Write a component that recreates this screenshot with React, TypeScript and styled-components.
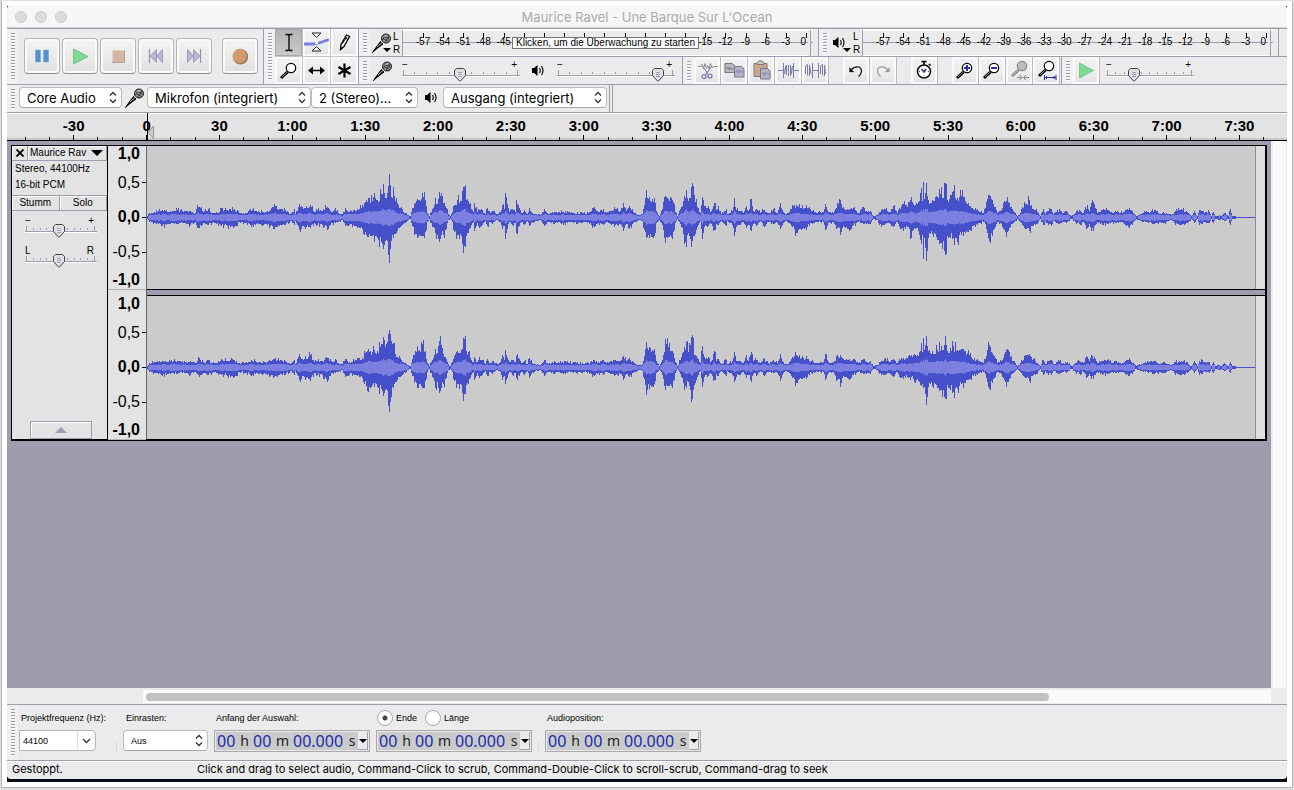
import React, { useState } from "react";
import styled, { createGlobalStyle, css } from "styled-components";

const line = "#9e9cae";
const face = "#ebebeb";
const panel = "#e3e3e3";
const sans = '"Liberation Sans", Arial, sans-serif';
const system = 'Inter, "Liberation Sans", sans-serif';

const GlobalStyle = createGlobalStyle`
  * { box-sizing: border-box; }
  body { margin: 0; background: #e0e0e0; font-family: ${sans}; color: #000; }
  button, select, input { font: inherit; color: inherit; margin: 0; padding: 0; border: 0; border-radius: 0; background: none; }
  svg { display: block; flex: none; }
`;

/* ---------- window ---------- */

const Page = styled.div`
  padding: 1px 1px 2px;
  min-height: 100vh;
  display: flex;
`;
const Frame = styled.div`
  flex: 1;
  min-width: 0;
  display: flex;
  background: #fff;
  border: solid #b4b4b4;
  border-width: 0 1px 1px;
  padding: 5px;
`;
const Backdrop = styled.div`
  flex: 1;
  min-width: 0;
  display: flex;
  background: #070d12;
  padding-bottom: 3px;
`;
const Window = styled.div`
  flex: 1;
  min-width: 0;
  display: flex;
  flex-direction: column;
  background: ${face};
  border-radius: 3px 3px 4px 4px;
  overflow: hidden;
`;
const TitleBar = styled.header`
  height: 22px;
  display: grid;
  grid-template-columns: 1fr auto 1fr;
  align-items: center;
  background: #f6f6f6;
  border-bottom: 1px solid #d2d2d2;
  padding: 0 8px;
`;
const Lights = styled.div`
  display: flex;
  gap: 8px;
`;
const Light = styled.button`
  width: 12px;
  height: 12px;
  border-radius: 50%;
  background: #dcdcdc;
  border: 1px solid #cdcdcd;
`;
const Title = styled.h1`
  margin: 0;
  font: 400 13px/20px ${system};
  color: #aaa;
`;

/* ---------- toolbars ---------- */

const Dock = styled.div`
  display: flex;
`;
const DockColumn = styled.div`
  flex: 1;
  min-width: 0;
`;
const DockRow = styled.div`
  display: flex;
  height: 28px;
`;
const Toolbar = styled.div<{ $grow?: boolean; $open?: boolean }>`
  display: flex;
  align-items: center;
  min-width: 0;
  border-top: 1px solid ${line};
  border-right: ${(p) => (p.$open ? "0" : `1px solid ${line}`)};
  flex: ${(p) => (p.$grow ? "1 1 0" : "none")};
`;
const Grip = styled.div`
  align-self: stretch;
  flex: none;
  width: 11px;
  padding: 4px 3px 3px 4px;
  background: #f0f0f0;
  &::before {
    content: "";
    display: block;
    height: 100%;
    background: repeating-linear-gradient(${line} 0 1px, #fff 1px 2px, #f0f0f0 2px 3px);
  }
`;
const Transport = styled.div`
  display: flex;
  gap: 2px;
  padding: 0 5px 2px 6px;
`;
const BigButton = styled.button<{ $apart?: boolean }>`
  width: 36px;
  height: 36px;
  margin-left: ${(p) => (p.$apart ? "8px" : "0")};
  border: 1px solid #b3b3b3;
  border-bottom-color: #8f8f8f;
  border-radius: 4px;
  background: linear-gradient(#f3f3f3, #e9e9e9 60%, #dedede);
  box-shadow: inset 0 0 0 2px #fbfbfb;
`;
const ToolGrid = styled.div`
  display: grid;
  grid-template-columns: repeat(3, 27px);
  grid-auto-rows: 27px;
  gap: 1px;
  background: #c4c4c4;
`;
const SmallButton = styled.button<{ $on?: boolean; $edge?: boolean }>`
  width: 27px;
  height: 27px;
  display: grid;
  place-items: center;
  flex: none;
  background: ${(p) =>
    p.$on ? "linear-gradient(#b4b4b4, #cacaca)" : "linear-gradient(#f2f2f2, #ececec 60%, #e2e2e2)"};
  box-shadow: inset 0 0 0 ${(p) => (p.$on ? "1px #a8a8a8" : "2px #fafafa")};
  border-right: ${(p) => (p.$edge ? "1px solid #bcbcbc" : "0")};
`;
const ButtonGroup = styled.div`
  display: flex;
`;
const EditGroups = styled.div`
  display: flex;
  gap: 14px;
  padding-right: 1px;
`;

/* ---------- meters ---------- */

const MeterHead = styled.button`
  position: relative;
  width: 23px;
  height: 26px;
  display: flex;
  align-items: center;
  padding-left: 2px;
`;
const MeterArrow = styled.svg`
  position: absolute;
  left: 13px;
  bottom: 4px;
`;
const Sides = styled.div`
  display: flex;
  flex-direction: column;
  width: 9px;
  font-size: 10px;
  line-height: 13px;
`;
const MeterBody = styled.div`
  position: relative;
  flex: 1;
  min-width: 0;
  align-self: stretch;
  display: flex;
  gap: 2px;
  margin-right: 5px;
  border-top: 1px solid #fff;
`;
const MeterBars = styled.div<{ $clip?: boolean }>`
  flex: ${(p) => (p.$clip ? "0 0 3px" : "1")};
  display: grid;
  grid-template-rows: 1fr 1fr;
  border-left: 1px solid ${line};
  background: linear-gradient(#fff 0 1px, transparent 1px);
  > i {
    border-bottom: 1px solid #fff;
  }
  > i:first-child {
    border-bottom-color: ${line};
  }
`;
const MeterScale = styled.div`
  position: absolute;
  inset: 0 7px 0 21px;
  display: flex;
  justify-content: space-between;
  font-size: 10px;
  line-height: 10px;
`;
const Mark = styled.div<{ $last?: boolean }>`
  position: relative;
  width: 0;
  display: flex;
  justify-content: ${(p) => (p.$last ? "flex-end" : "center")};
  padding-top: 7px;
  white-space: nowrap;
  &::before {
    content: "";
    position: absolute;
    top: 3px;
    left: 0;
    width: 1px;
    height: 5px;
    background: #000;
  }
`;
const MeterHint = styled.button`
  position: absolute;
  left: 110px;
  top: 7px;
  height: 12px;
  padding: 0 3px;
  border: 1px solid #777;
  background: #fff;
  font-size: 10px;
  line-height: 10px;
  white-space: nowrap;
`;
const Filler = styled.div`
  flex: 1;
  border-top: 1px solid ${line};
`;
const Stub = styled.div`
  flex: 0 0 8px;
  border-top: 1px solid ${line};
`;

/* ---------- sliders ---------- */

const SliderBox = styled.label<{ $w: number }>`
  position: relative;
  display: block;
  flex: none;
  width: ${(p) => p.$w}px;
  height: 26px;
  > input {
    position: absolute;
    inset: 0;
    width: 100%;
    height: 100%;
    opacity: 0;
  }
`;
const Ends = styled.span<{ $w: number }>`
  position: absolute;
  left: 0;
  top: 2px;
  width: ${(p) => p.$w}px;
  display: flex;
  justify-content: space-between;
  font-size: 10px;
  line-height: 10px;
`;

function Slider({ w, at, label, ends = ["−", "+"] }: { w: number; at: number; label: string; ends?: string[] }) {
  const [value, setValue] = useState(at);
  const step = (w - 4) / 10;
  return (
    <SliderBox $w={w}>
      <Ends $w={w - 3}>
        <span>{ends[0]}</span>
        <span>{ends[1]}</span>
      </Ends>
      <svg width={w} height="26" shapeRendering="crispEdges" aria-hidden="true">
        <rect x="0" y="17" width={w} height="1" fill={line} />
        <rect x="0" y="18" width={w} height="1" fill="#fff" />
        {Array.from({ length: 11 }, (_, i) => {
          const tall = i % 10 === 0;
          return (
            <rect key={i} x={Math.round(1 + i * step)} y={tall ? 12 : 14} width="1" height={tall ? 5 : 2} fill={line} />
          );
        })}
        <g transform={`translate(${value - 6} 10)`} shapeRendering="auto">
          <path d="M2.5.5h7l2 2v5l-5 5.5h-1l-5-5.5v-5z" fill="#dedee4" stroke="#444" />
          <path d="M4 4.5h4M4 6.5h4M4 8.5h4" stroke="#a5a3b5" />
        </g>
      </svg>
      <input
        type="range"
        aria-label={label}
        min={0}
        max={w}
        value={value}
        onChange={(e) => setValue(Number(e.target.value))}
      />
    </SliderBox>
  );
}

const Spaced = styled.div<{ $l: number; $r: number }>`
  padding: 0 ${(p) => p.$r}px 0 ${(p) => p.$l}px;
`;

/* ---------- drop-downs ---------- */

const SelectBox = styled.div<{ $w: number; $small?: boolean }>`
  position: relative;
  flex: none;
  width: ${(p) => p.$w}px;
  > svg {
    position: absolute;
    right: 5px;
    top: 4px;
    pointer-events: none;
  }
  > select {
    appearance: none;
    display: block;
    width: 100%;
    height: 21px;
    padding-left: 7px;
    border: 1px solid #bdbdbd;
    border-bottom-color: #a9a9a9;
    border-radius: 4px;
    background: #fff;
    ${(p) =>
      p.$small
        ? css`
            font: 9px ${sans};
          `
        : css`
            font: 13px ${system};
          `}
  }
`;
function Select({ w, value, label, small, id }: { w: number; value: string; label: string; small?: boolean; id?: string }) {
  return (
    <SelectBox $w={w} $small={small}>
      <select id={id} aria-label={label} defaultValue={value}>
        <option>{value}</option>
      </select>
      <svg width="8" height="13" viewBox="0 0 8 13" fill="none" stroke="#333" strokeWidth="1.3">
        <path d="M1 4.5l3-3 3 3M1 8.500l3 3 3-3" />
      </svg>
    </SelectBox>
  );
}
const DeviceControls = styled.div`
  display: flex;
  align-items: center;
  padding: 0 2px 2px 1px;
`;
const IconSlot = styled.span<{ $w: number }>`
  width: ${(p) => p.$w}px;
  display: grid;
  place-items: center;
`;

/* ---------- icons ---------- */

const Mic = () => (
  <svg width="20" height="20" viewBox="0 0 20 20">
    <path d="M.5 19.500l4.500-4 6-4.500-2.500-2.500-4.500 6z" fill="#000" stroke="#000" />
    <path d="M5 14l5-4.500" stroke="#ccc" />
    <circle cx="14" cy="5.500" r="4.500" fill="#9a9a9a" stroke="#111" />
    <path d="M11 5.500l5.500 3M11.500 3l6 3.500M14 1.500l-4 6M17 3l-4 6M15 4l2 1" stroke="#333" />
    <path d="M12.500 3.500l2-1" stroke="#fff" />
  </svg>
);
const Speaker = () => (
  <svg width="14" height="13" viewBox="0 0 14 13">
    <path d="M1 4h2l3.500-3v11L3 9H1z" fill="#000" />
    <path d="M8.500 4q1.500 2.500 0 5M10.500 2q3 4.500 0 9" fill="none" stroke="#111" strokeWidth="1.200" />
  </svg>
);
const PauseIcon = () => (
  <svg width="34" height="34" viewBox="0 0 34 34">
    <path d="M10.500 11h5v12h-5zM18.500 11h5v12h-5z" fill="#4f92d3" stroke="#8fa6bd" strokeWidth=".6" />
  </svg>
);
const PlayIcon = () => (
  <svg width="34" height="34" viewBox="0 0 34 34">
    <path d="M10.500 10l14.500 7.500-14.500 7.500z" fill="#7ed991" stroke="#63b276" strokeWidth=".8" />
  </svg>
);
const StopIcon = () => (
  <svg width="34" height="34" viewBox="0 0 34 34">
    <path d="M11.500 11.500h11.500v11.500h-11.500z" fill="#d2b7a6" />
    <path d="M11 23.500h12.500v-12" fill="none" stroke="#b39d90" />
  </svg>
);
const SkipIcon = ({ flip }: { flip?: boolean }) => (
  <svg width="34" height="34" viewBox="0 0 34 34">
    <g transform={flip ? "translate(34 0) scale(-1 1)" : undefined}>
      <path d="M10.500 10v14" stroke="#9690a8" strokeWidth="1.200" />
      <path d="M17.500 10.500v13l-6.500-6.500zM23.500 10.500v13l-6-6.500z" fill="#beb2d6" stroke="#8f89a2" strokeWidth=".7" />
    </g>
  </svg>
);
const RecordIcon = () => (
  <svg width="34" height="34" viewBox="0 0 34 34">
    <circle cx="17.500" cy="17.700" r="7.700" fill="#94795f" />
    <circle cx="16.700" cy="17" r="7.200" fill="#cf9a6e" />
  </svg>
);
const BeamIcon = () => (
  <svg width="21" height="21" viewBox="0 0 21 21" fill="none" stroke="#000" strokeWidth="1.300">
    <path d="M7.500 2.500H10l1 1 1-1h2.500M11 3.500v14M7.500 18.500H10l1-1 1 1h2.500" />
  </svg>
);
const EnvelopeIcon = () => (
  <svg width="25" height="23" viewBox="0 0 25 23">
    <path d="M0 13h9q8-1 16-4.500" fill="none" stroke="#7b80e2" strokeWidth="2.800" />
    <path d="M8 2h9l-4.500 4.500zM8 20h9l-4.500-4.500z" fill="#fff" stroke="#222" />
    <circle cx="12.500" cy="11.500" r="1.500" fill="#fff" />
  </svg>
);
const PencilIcon = () => (
  <svg width="21" height="21" viewBox="0 0 21 21">
    <path d="M6.500 17.500l.5-5 5.500-9.500 3 1.500-5.500 10z" fill="#fff" stroke="#000" strokeWidth="1.300" />
    <path d="M11 6l3 1.500M8.500 11.500l4-6.500" stroke="#000" />
    <path d="M6 18.500l.5-3.500 2 1.200z" fill="#000" />
  </svg>
);
const Lens = ({ sign, tone = "#000", fill = "#fff" }: { sign?: string; tone?: string; fill?: string }) => (
  <g>
    <path d="M2 17l6.500-6" stroke={tone} strokeWidth="3" />
    <path d="M3 16l5-5" stroke={tone === "#000" ? "#999" : "#ccc"} strokeWidth=".8" />
    <circle cx="12" cy="7" r="4.700" fill={fill} stroke={tone} strokeWidth="1.200" />
    {sign && <path d={sign} stroke="#2c2ca8" strokeWidth="2" />}
  </g>
);
const ZoomIcon = ({ sign }: { sign?: string }) => (
  <svg width="20" height="20" viewBox="0 0 20 20" fill="none">
    <Lens sign={sign} />
  </svg>
);
const FitSelectionIcon = () => (
  <svg width="21" height="21" viewBox="0 0 21 21" fill="none">
    <g transform="translate(1 -1)">
      <Lens tone="#8a8a8a" fill="#bdbdbd" />
    </g>
    <path d="M8 17.500h5M14 17.500h6M10.500 15l2.500 2.500-2.500 2.500M17 15l-2.500 2.500 2.500 2.500" stroke="#8a8a8a" />
  </svg>
);
const FitProjectIcon = () => (
  <svg width="21" height="21" viewBox="0 0 21 21" fill="none">
    <g transform="translate(1 -1)">
      <Lens />
    </g>
    <path d="M8.500 15v5M20 15v5M8.500 17.500H20M11 16l-1.500 1.500L11 19M17.500 16l1.500 1.500-1.500 1.500" stroke="#2c2ca8" />
  </svg>
);
const ShiftIcon = () => (
  <svg width="21" height="21" viewBox="0 0 21 21">
    <path d="M5 10.500h11" stroke="#000" strokeWidth="1.600" />
    <path d="M2 10.500l5-4v8zM19 10.500l-5-4v8z" fill="#000" />
  </svg>
);
const MultiIcon = () => (
  <svg width="21" height="21" viewBox="0 0 21 21" stroke="#000" strokeWidth="2.200">
    <path d="M10.500 3.500v14M4.500 7l12 7M4.500 14l12-7" />
  </svg>
);
const CutIcon = () => (
  <svg width="21" height="21" viewBox="0 0 21 21" fill="none">
    <path d="M1 6.500h3l1-2 1.500 4 1.500-5 1.500 5 1-3 1.500 3 1.500-5 1.500 4 1.500-1h4" stroke="#8a8a8a" />
    <path d="M6 7l6 8M14 7l-5.500 8" stroke="#6f6fa8" />
    <circle cx="7" cy="16.500" r="2" stroke="#6f6fa8" strokeWidth="1.200" />
    <circle cx="13" cy="16" r="2" stroke="#6f6fa8" strokeWidth="1.200" />
  </svg>
);
const CopyIcon = () => (
  <svg width="21" height="21" viewBox="0 0 21 21" fill="#b7b7b7" stroke="#777">
    <path d="M1 3.500h7l2.500 2v7H1z" />
    <path d="M2 9h1l1-2 1 3 1-3 1 2h3" fill="none" stroke="#888" />
    <path d="M10.500 6.500h7l2.500 2.500v8h-9.500z" fill="#b4b4c4" stroke="#74749a" />
    <path d="M11.500 12h1l1-2 1 4 1-4 1 2h3" fill="none" stroke="#8888ac" />
  </svg>
);
const PasteIcon = () => (
  <svg width="21" height="21" viewBox="0 0 21 21">
    <path d="M3 3.500h13v13H3z" fill="#c9a78f" stroke="#8a7a70" />
    <path d="M6 4.500V3l2-2h3l2 2v1.500z" fill="#c8c8c8" stroke="#777" />
    <path d="M9.500 8.500h7l2.500 2.500v8H9.500z" fill="#b4b4c4" stroke="#74749a" />
    <path d="M10.500 14h1l1-2 1 4 1-4 1 2h3" fill="none" stroke="#8888ac" />
  </svg>
);
const TrimIcon = () => (
  <svg width="21" height="21" viewBox="0 0 21 21" fill="none" stroke="#7c7cab">
    <path d="M0 10.500h5M16 10.500h5M5.500 3v15M15.500 3v15" />
    <path d="M6.500 14l1-8 1 9V5M10.500 16V5M12.500 16V5l1 9 1-8" />
  </svg>
);
const SilenceIcon = () => (
  <svg width="21" height="21" viewBox="0 0 21 21" fill="none" stroke="#7c7cab">
    <path d="M.5 14V6l2-1.500v11M4.500 16V5l1.500 9M7.500 3v15M13.500 3v15M7.500 10.500h6M15.500 14V6l2-1.500v11M19.500 16V5l1 9" />
  </svg>
);
const UndoIcon = ({ redo }: { redo?: boolean }) => (
  <svg width="20" height="20" viewBox="0 0 20 20">
    <g transform={redo ? "translate(20 0) scale(-1 1)" : undefined} stroke={redo ? "#9a9a9a" : "#111"}>
      <path d="M5 9q3.500-4 8-3 4 2 1.500 7.500l-2 2" fill="none" strokeWidth="1.200" />
      <path d="M3.500 6.500v4.500h4.500z" fill={redo ? "#9a9a9a" : "#111"} strokeWidth=".3" />
    </g>
  </svg>
);
const ClockIcon = () => (
  <svg width="20" height="22" viewBox="0 0 20 22" fill="none">
    <path d="M7.500 1.500h5M10 1v4M15 4l1.500 1.500" stroke="#000" strokeWidth="1.600" />
    <circle cx="10" cy="11.500" r="6.500" fill="#fff" stroke="#111" strokeWidth="1.500" />
    <path d="M7.500 9l2.500 3 2-3" stroke="#2c2ca8" strokeWidth="1.600" />
    <path d="M10 15.500v1M5 11.500h1M14 11.500h1" stroke="#555" />
  </svg>
);
const SmallPlay = () => (
  <svg width="21" height="21" viewBox="0 0 21 21">
    <path d="M3.500 3l14 7.500-14 7.500z" fill="#7ed991" stroke="#6ec181" strokeWidth=".8" />
  </svg>
);

/* ---------- time ruler ---------- */

const TimeRuler = styled.div`
  height: 29px;
  display: flex;
  padding: 0 11px 0 6px;
  background: ${panel};
  border-top: 1px solid ${line};
  border-bottom: 1px solid #000;
  box-shadow: inset 0 1px #fff, inset 0 -2px #c8c8c8;
  font: bold 15px/26px ${sans};
`;
const TimeCell = styled.div<{ $zero?: boolean }>`
  position: relative;
  flex: 3 1 0;
  min-width: 0;
  text-align: center;
  ${(p) =>
    p.$zero &&
    css`
      &::after {
        content: "";
        position: absolute;
        left: 50%;
        top: 0;
        width: 1px;
        height: 27px;
        background: #000;
      }
    `}
`;
const Ticks = styled.div<{ $lead?: boolean }>`
  position: ${(p) => (p.$lead ? "static" : "absolute")};
  flex: 1 1 0;
  inset: auto 0 0;
  height: 27px;
  display: flex;
  align-items: flex-end;
  > i {
    flex: 1;
    height: 3px;
    background: linear-gradient(#000, #000) center / 1px 100% no-repeat;
  }
  > i:nth-child(2) {
    height: 5px;
  }
`;
const PlayMarker = styled.svg`
  position: absolute;
  left: calc(50% + 1px);
  bottom: 1px;
`;

/* ---------- track ---------- */

const Middle = styled.div`
  flex: 1;
  display: flex;
`;
const TrackArea = styled.main`
  flex: 1;
  min-width: 0;
  padding: 4px;
  background: ${line};
`;
const Track = styled.section`
  display: flex;
  border: solid #000;
  border-width: 1px 2px 2px 1px;
`;
const TrackPanel = styled.div`
  flex: none;
  width: 96px;
  display: flex;
  flex-direction: column;
  align-items: stretch;
  background: ${panel};
  border-right: 1px solid #000;
  font-size: 10px;
  line-height: 14px;
`;
const bevel = css`
  border: solid ${line};
  border-width: 0 1px 1px 0;
  box-shadow: inset 1px 1px #fff;
`;
const TrackHead = styled.div`
  display: flex;
  height: 15px;
`;
const CloseButton = styled.button`
  ${bevel}
  width: 16px;
  display: grid;
  place-items: center;
`;
const NameButton = styled.button`
  ${bevel}
  flex: 1;
  display: flex;
  justify-content: space-between;
  align-items: center;
  padding: 0 3px 0 2px;
  white-space: nowrap;
`;
const TrackInfo = styled.p`
  margin: 0;
  padding: 0 3px 2px;
  line-height: 16px;
`;
const MuteSolo = styled.div`
  display: grid;
  grid-template-columns: 1fr 1fr;
  border-top: 1px solid ${line};
  > button {
    ${bevel}
    height: 15px;
  }
`;
const PanelSliders = styled.div`
  padding: 3px 0 0 13px;
  display: flex;
  flex-direction: column;
  gap: 4px;
`;
const Collapse = styled.button`
  ${bevel}
  border-width: 1px;
  width: 62px;
  height: 18px;
  margin: auto 0 0 18px;
  display: grid;
  place-items: center;
`;
const AmpColumn = styled.div`
  flex: none;
  width: 38px;
  display: flex;
  flex-direction: column;
  gap: 7px;
  background: ${panel};
`;
const AmpRuler = styled.div`
  height: 143px;
  display: grid;
  grid-template-rows: 15px 43px 26px 44px 15px;
  box-shadow: 0 1px #b5b5b5;
  font-size: 16px;
  line-height: 12px;
`;
const Amp = styled.div<{ $bold?: boolean; $tick?: boolean }>`
  display: flex;
  justify-content: flex-end;
  align-items: center;
  gap: 2px;
  padding-right: ${(p) => (p.$tick ? "0" : "6px")};
  font-weight: ${(p) => (p.$bold ? 700 : 400)};
  &:last-child {
    align-items: flex-start;
  }
  &::after {
    content: "";
    display: ${(p) => (p.$tick ? "block" : "none")};
    width: 4px;
    height: 1px;
    background: #000;
  }
`;
const Waves = styled.div`
  flex: 1;
  min-width: 0;
  display: flex;
  flex-direction: column;
  border-left: 1px solid #666;
`;
const Clip = styled.div`
  display: flex;
  height: 143px;
  padding-right: 9px;
  background: #dfdfdf;
  > svg {
    flex: 1;
    min-width: 0;
    width: 100%;
    height: 143px;
    background: #cbcbcb;
    border-right: 1px solid #8f8f8f;
  }
`;
const ChannelGap = styled.div`
  height: 7px;
  background: ${line};
  border: solid #000;
  border-width: 1px 0;
`;

/* Peak levels: column, up/down of the left channel, then of the right one where it differs. */
type Peak = [number, number, number, number?, number?];
const part = (origin: number, rows: Peak[]): Peak[] =>
  rows.map(([x, ...rest]) => [Math.round(origin + x / 3), ...rest] as Peak);

const peaks: Peak[] = [
  ...part(0, [
    [0, 1, 1], [6, 4, 4], [20, 5, 5], [45, 7, 8], [70, 6, 6], [90, 7, 6], [110, 6, 5], [130, 6, 7], [144, 4, 4],
    [149, 12, 10, 6, 6], [157, 10, 10, 9, 9], [168, 5, 5], [182, 8, 7], [195, 4, 5], [215, 5, 6], [222, 9, 8, 8, 7],
    [232, 7, 7], [250, 8, 9], [262, 8, 9, 7, 9], [275, 4, 4], [295, 4, 5], [315, 7, 7], [335, 5, 6], [355, 5, 6],
    [370, 7, 8], [382, 13, 11, 8, 9], [390, 8, 9], [415, 7, 7], [430, 3, 3], [440, 8, 7], [445, 3, 3], [457, 13, 12, 13, 12],
    [468, 8, 8], [490, 12, 10, 12, 13], [500, 5, 5], [510, 7, 7], [525, 6, 7], [541, 12, 10, 12, 14],
  ]),
  ...part(173, [
    [22, 10, 12, 9, 14], [35, 5, 5], [45, 9, 5], [55, 4, 4], [65, 3, 2], [75, 9, 8, 8, 9],
    [88, 5, 7], [110, 8, 10, 9, 8], [125, 12, 11, 9, 10], [135, 15, 14], [145, 19, 19, 18, 24], [155, 16, 18], [163, 24, 24, 17, 19],
    [172, 17, 20], [182, 23, 24, 23, 21], [190, 33, 31, 30, 28], [197, 19, 22, 23, 21], [204, 31, 37, 33, 38],
    [208, 43, 45, 37, 44], [212, 20, 23, 26, 29], [220, 30, 20, 24, 20], [226, 16, 16, 13, 14], [240, 9, 9, 9, 9],
    [255, 4, 5], [268, 1, 1], [271, 1, 1], [275, 9, 8], [285, 14, 16, 16, 13], [295, 17, 19, 16, 20], [301, 16, 18, 15, 16],
    [307, 24, 18, 23, 20], [315, 17, 14], [320, 4, 4], [327, 1, 1], [335, 8, 9], [345, 19, 15, 18, 20], [352, 13, 17, 14, 14],
    [358, 25, 24, 26, 25], [363, 24, 17, 22, 20], [370, 14, 17], [378, 9, 11], [385, 3, 2], [389, 1, 1], [395, 5, 4],
    [402, 12, 14], [410, 17, 17, 16, 16], [421, 16, 16, 14, 16], [427, 26, 26, 18, 25], [434, 32, 29, 31, 26], [439, 17, 18],
    [445, 16, 15, 15, 16], [452, 8, 7], [458, 5, 4], [463, 14, 13, 10, 12], [470, 5, 5], [474, 8, 8], [482, 8, 8], [494, 3, 3],
    [502, 9, 8], [509, 4, 4], [515, 6, 6], [530, 3, 2], [540, 5, 4], [547, 12, 11, 12, 12], [551, 8, 8], [556, 24, 21, 17, 16],
    [562, 13, 11, 9, 10], [567, 5, 4], [575, 8, 7], [585, 5, 5], [589, 17, 15, 11, 10], [597, 9, 8], [603, 4, 4], [612, 7, 7],
    [620, 3, 3], [627, 9, 8, 9, 10], [637, 4, 4], [645, 3, 3], [660, 2, 2], [673, 8, 8], [680, 4, 4], [705, 5, 5], [725, 5, 5],
    [740, 6, 5], [755, 4, 4], [785, 4, 5], [805, 4, 4], [823, 10, 9, 7, 8], [833, 5, 5], [850, 8, 7], [858, 4, 4], [870, 6, 6],
    [886, 8, 7], [900, 6, 6], [910, 14, 13, 11, 12], [918, 6, 6], [928, 11, 11, 9, 9], [940, 5, 5], [955, 2, 2], [965, 3, 3],
    [972, 12, 12], [979, 27, 20, 25, 27], [984, 18, 17],
  ]),
  ...part(493, [
    [28, 20, 20, 20, 21], [35, 18, 19], [43, 19, 18, 18, 16], [48, 6, 5], [57, 1, 2], [65, 8, 7], [72, 20, 20, 15, 18],
    [76, 21, 25, 28, 22], [85, 18, 19, 20, 18], [93, 19, 19, 16, 18], [100, 15, 14], [106, 5, 5], [112, 1, 1], [120, 8, 6],
    [130, 16, 16], [139, 27, 29, 25, 20], [144, 16, 15], [149, 19, 21, 22, 22], [157, 34, 23, 32, 31], [163, 22, 18, 12, 17],
    [172, 10, 9], [180, 4, 3], [186, 20, 21, 21, 19], [191, 11, 9], [200, 9, 9], [214, 6, 6], [222, 14, 12, 16, 12], [228, 7, 6],
    [233, 11, 7, 8, 8], [243, 3, 3], [257, 8, 8], [262, 3, 3], [275, 6, 7], [282, 19, 18, 15, 14], [289, 7, 9], [300, 6, 7],
    [310, 4, 4], [318, 11, 10, 12, 10], [325, 6, 7], [334, 18, 13, 15, 14], [340, 6, 6], [349, 8, 8], [360, 4, 3], [370, 7, 8, 9, 7],
    [385, 4, 4], [400, 8, 6, 7, 5], [412, 4, 5], [421, 14, 11, 13, 13], [430, 5, 5], [438, 3, 3], [448, 5, 5], [455, 12, 9, 10, 10],
    [468, 12, 15, 12, 15], [480, 9, 11], [500, 9, 9], [512, 6, 5], [530, 4, 4], [540, 5, 4], [550, 5, 4], [556, 13, 12, 13, 12],
    [563, 5, 5], [580, 4, 4], [592, 14, 10, 12, 12], [603, 13, 14, 10, 15], [612, 8, 9], [620, 8, 11], [640, 9, 7], [655, 4, 4],
    [670, 10, 6, 8, 6], [680, 5, 5], [690, 6, 6], [700, 1, 1], [712, 2, 2], [722, 7, 9, 6, 7], [735, 8, 6, 9, 7], [747, 5, 5],
    [760, 11, 9, 8, 9], [770, 4, 4], [778, 9, 9], [790, 13, 13, 9, 11], [800, 10, 9], [805, 15, 9, 11, 10], [814, 20, 20, 12, 9],
    [823, 11, 10, 13, 14], [835, 15, 13, 11, 13], [842, 29, 26, 24, 18], [847, 16, 17], [850, 35, 41, 29, 20], [853, 18, 20],
    [857, 34, 43, 31, 37], [863, 17, 20], [875, 17, 16, 16, 18], [890, 20, 22, 17, 20], [903, 30, 25, 21, 22], [909, 19, 23],
    [915, 34, 37, 31, 31], [920, 17, 18], [930, 22, 20, 19, 22], [940, 26, 20, 21, 24], [950, 19, 24, 17, 21], [957, 20, 17, 17, 18],
  ]),
  ...part(813, [
    [3, 21, 17, 18, 16], [10, 20, 18, 18, 20], [22, 13, 14, 14, 12], [40, 8, 8], [55, 6, 5], [68, 4, 4], [75, 9, 6], [82, 18, 15],
    [87, 22, 23, 22, 21], [94, 18, 15, 15, 13], [105, 10, 9], [112, 4, 4], [122, 7, 6], [137, 16, 19, 17, 19], [148, 14, 10, 15, 11],
    [160, 6, 5], [172, 1, 1], [180, 4, 4], [195, 13, 11], [208, 17, 13, 13, 13], [216, 8, 8], [226, 7, 7], [240, 1, 1], [248, 8, 7],
    [255, 3, 3], [262, 6, 5], [272, 8, 8, 7, 7], [280, 3, 3], [298, 8, 6, 6, 6], [308, 4, 4], [320, 5, 4], [332, 1, 1], [345, 4, 4],
    [357, 7, 6], [370, 4, 4], [382, 12, 10, 10, 9], [388, 6, 6], [394, 14, 13, 12, 11], [405, 9, 7], [412, 4, 4], [425, 7, 7],
    [443, 7, 6, 8, 6], [455, 4, 4], [465, 6, 5], [485, 4, 4], [508, 9, 10, 9, 8], [518, 4, 4], [527, 1, 1], [550, 4, 4], [583, 7, 6],
    [600, 3, 4], [610, 5, 5], [632, 2, 2], [642, 5, 5], [662, 8, 7, 6, 7], [680, 5, 5], [692, 1, 1], [702, 6, 5], [710, 1, 1],
    [718, 7, 7], [735, 5, 4], [747, 5, 5], [754, 1, 1], [760, 5, 5], [766, 1, 1], [777, 2, 2], [784, 1, 1], [792, 4, 3], [804, 1, 1],
    [810, 8, 7, 5, 5], [815, 1, 1], [825, 1, 1], [828, 0, 0], [885, 0, 0],
  ]),
];

function noise(n: number) {
  const s = Math.sin(n * 127.1 + 31.7) * 43758.5453;
  return s - Math.floor(s);
}
/* Most columns stay near the envelope; about one in seven sticks out of it. */
function roughness(n: number) {
  return noise(n + 0.37) > 0.86 ? 1.3 : 0.76 + 0.36 * noise(n);
}

function wavePaths(channel: 0 | 1) {
  let outer = "";
  let inner = "";
  for (let i = 0; i < peaks.length - 1; i++) {
    const [x0, u0, d0, v0, e0] = peaks[i];
    const [x1, u1, d1, v1, e1] = peaks[i + 1];
    const a = channel ? [v0 ?? u0 * 0.92, e0 ?? d0 * 0.95] : [u0, d0];
    const b = channel ? [v1 ?? u1 * 0.92, e1 ?? d1 * 0.95] : [u1, d1];
    for (let x = x0; x < x1; x++) {
      const t = (x - x0) / (x1 - x0);
      const exact = x === x0;
      const up = Math.round((a[0] + (b[0] - a[0]) * t) * (exact ? 1 : roughness(x + channel * 7)));
      const down = Math.round((a[1] + (b[1] - a[1]) * t) * (exact ? 1 : roughness(x * 3 + 11)));
      outer += `M${x} ${71 - up}h1v${up + down + 1}h-1z`;
      const level = (a[0] + a[1] + (b[0] + b[1] - a[0] - a[1]) * t) / 2;
      if (level > 1.5) {
        const r = Math.min(Math.min(up, down) - 1, Math.round(0.8 + Math.min(level, 30) * 0.23 + noise(x * 5) * 0.7));
        if (r > 0) inner += `M${x} ${71 - r}h1v${2 * r + 1}h-1z`;
      }
    }
  }
  return { outer, inner };
}
const channels = [wavePaths(0), wavePaths(1)];

function Channel({ index }: { index: 0 | 1 }) {
  return (
    <Clip>
      <svg viewBox="0 0 1108 143" preserveAspectRatio="none" shapeRendering="crispEdges" role="img" aria-label="Waveform">
        <path d={channels[index].outer} fill="#4650cb" />
        <path d={channels[index].inner} fill="#7b7fdf" />
      </svg>
    </Clip>
  );
}

const amps: { text: string; bold?: boolean; tick?: boolean }[] = [
  { text: "1,0", bold: true },
  { text: "0,5", tick: true },
  { text: "0,0", bold: true, tick: true },
  { text: "-0,5", tick: true },
  { text: "-1,0", bold: true },
];
const AmpScale = () => (
  <AmpRuler>
    {amps.map((a) => (
      <Amp key={a.text} $bold={a.bold} $tick={a.tick}>
        {a.text}
      </Amp>
    ))}
  </AmpRuler>
);

/* ---------- scroll bars ---------- */

const VScroll = styled.div`
  flex: none;
  width: 16px;
  background: #fafafa;
  border: solid #ececec;
  border-width: 0 1px 0 2px;
`;
const HScroll = styled.div`
  height: 16px;
  padding: 2px 16px 1px 136px;
`;
const HTrack = styled.div`
  height: 13px;
  padding: 3px 3px 2px;
  background: #fafafa;
`;
const HThumb = styled.div`
  width: 80.5%;
  height: 8px;
  border-radius: 4px;
  background: #c1c1c1;
`;

/* ---------- selection bar ---------- */

const SelectionBar = styled.div`
  height: 57px;
  display: flex;
  border-top: 1px solid ${line};
  border-bottom: 1px solid ${line};
  font-size: 9px;
  line-height: 16px;
`;
const Field = styled.div<{ $l: number; $w?: number; $inset?: number }>`
  width: ${(p) => (p.$w ? `${p.$w}px` : "auto")};
  margin-left: ${(p) => p.$l}px;
  padding-top: 5px;
  display: flex;
  flex-direction: column;
  gap: 4px;
  white-space: nowrap;
  > label,
  > span {
    padding-left: ${(p) => p.$inset ?? 2}px;
  }
`;
const Combo = styled.div`
  display: flex;
  width: 77px;
  height: 21px;
  border: 1px solid #b5b5b5;
  border-radius: 0 4px 4px 0;
  background: #fff;
  > input {
    flex: 1;
    min-width: 0;
    padding-left: 3px;
    border-right: 1px solid #ddd;
  }
  > button {
    width: 17px;
    display: grid;
    place-items: center;
  }
`;
const Divider = styled.div`
  align-self: flex-end;
  width: 1px;
  height: 9px;
  margin: 0 0 9px 6px;
  background: #d6d6d6;
`;
const Radios = styled.div`
  display: flex;
  align-items: center;
  gap: 8px;
  height: 16px;
  padding-left: 1px;
  > label {
    display: flex;
    align-items: center;
    gap: 3px;
  }
  input {
    appearance: none;
    width: 16px;
    height: 16px;
    border: 1px solid #a9a9a9;
    border-radius: 50%;
    background: #fff;
  }
  input:checked {
    background: radial-gradient(circle, #444 0 2px, #fff 3px);
  }
`;
const TimeBox = styled.div`
  display: grid;
  grid-template-columns: 19px 17px 19px 21px 53px 1fr 10px;
  align-items: center;
  justify-items: center;
  width: 156px;
  height: 22px;
  padding: 0 1px 0 2px;
  border: 1px solid #a9a9a9;
  box-shadow: inset 0 0 0 1px #e8e8e8;
  background: #cacaca;
  font: 14px/18px "Noto Sans", sans-serif;
  color: #222;
  > button {
    width: 10px;
    height: 18px;
    display: grid;
    place-items: center;
    background: ${face};
    border: solid ${line};
    border-width: 0 1px 1px 0;
  }
`;
const Digits = styled.input`
  width: 100%;
  font-size: 16px;
  line-height: 18px;
  color: #1a2cae;
  outline: 0;
`;
const Down = ({ w = 8 }: { w?: number }) => (
  <svg width={w} height={w / 2} viewBox="0 0 8 4">
    <path d="M0 0h8L4 4z" />
  </svg>
);
const TimeField = ({ label }: { label: string }) => (
  <TimeBox role="group" aria-label={label}>
    <Digits aria-label="Stunden" defaultValue="00" />
    <span>h</span>
    <Digits aria-label="Minuten" defaultValue="00" />
    <span>m</span>
    <Digits aria-label="Sekunden" defaultValue="00.000" />
    <span>s</span>
    <button aria-label="Format">
      <Down />
    </button>
  </TimeBox>
);
const StatusBar = styled.footer`
  height: 18px;
  display: flex;
  padding-left: 5px;
  border-top: 1px solid #fff;
  font: 11px/15px ${system};
  white-space: nowrap;
  > span:first-child {
    width: 185px;
  }
`;

/* ---------- page ---------- */

const levels = Array.from({ length: 20 }, (_, i) => i * 3 - 57);
const times = [
  "-30", "0", "30", "1:00", "1:30", "2:00", "2:30", "3:00", "3:30", "4:00", "4:30", "5:00", "5:30", "6:00", "6:30", "7:00", "7:30",
];

function Meter({ icon, label, hint }: { icon: React.ReactNode; label: string; hint?: string }) {
  return (
    <Toolbar $grow>
      <Grip />
      <MeterHead aria-label={label}>
        {icon}
        <MeterArrow width="8" height="4" viewBox="0 0 8 4">
          <path d="M0 0h8L4 4z" />
        </MeterArrow>
      </MeterHead>
      <Sides>
        <span>L</span>
        <span>R</span>
      </Sides>
      <MeterBody>
        <MeterBars>
          <i />
          <i />
        </MeterBars>
        <MeterBars $clip>
          <i />
          <i />
        </MeterBars>
        <MeterScale>
          {levels.map((l) => (
            <Mark key={l} $last={l === 0}>
              {hint && l > -45 && l < -15 ? null : l}
            </Mark>
          ))}
        </MeterScale>
        {hint && <MeterHint>{hint}</MeterHint>}
      </MeterBody>
    </Toolbar>
  );
}

export default function App() {
  return (
    <Page>
      <GlobalStyle />
      <Frame>
        <Backdrop>
          <Window>
            <TitleBar>
              <Lights>
                <Light aria-label="Schließen" />
                <Light aria-label="Minimieren" />
                <Light aria-label="Zoomen" />
              </Lights>
              <Title>Maurice Ravel - Une Barque Sur L'Ocean</Title>
            </TitleBar>

            <Dock>
              <Toolbar>
                <Grip />
                <Transport>
                  <BigButton aria-label="Pause"><PauseIcon /></BigButton>
                  <BigButton aria-label="Wiedergabe"><PlayIcon /></BigButton>
                  <BigButton aria-label="Stopp"><StopIcon /></BigButton>
                  <BigButton aria-label="Zum Anfang"><SkipIcon /></BigButton>
                  <BigButton aria-label="Zum Ende"><SkipIcon flip /></BigButton>
                  <BigButton aria-label="Aufnahme" $apart><RecordIcon /></BigButton>
                </Transport>
              </Toolbar>
              <Toolbar>
                <Grip />
                <ToolGrid>
                  <SmallButton $on aria-label="Auswahl"><BeamIcon /></SmallButton>
                  <SmallButton aria-label="Hüllkurve"><EnvelopeIcon /></SmallButton>
                  <SmallButton aria-label="Zeichnen"><PencilIcon /></SmallButton>
                  <SmallButton aria-label="Zoom"><ZoomIcon /></SmallButton>
                  <SmallButton aria-label="Verschieben"><ShiftIcon /></SmallButton>
                  <SmallButton aria-label="Multi"><MultiIcon /></SmallButton>
                </ToolGrid>
              </Toolbar>
              <DockColumn>
                <DockRow>
                  <Meter icon={<Mic />} label="Aufnahmepegel" hint="Klicken, um die Überwachung zu starten" />
                  <Meter icon={<Speaker />} label="Wiedergabepegel" />
                  <Stub />
                </DockRow>
                <DockRow>
                  <Toolbar>
                    <Grip />
                    <IconSlot $w={26}><Mic /></IconSlot>
                    <Spaced $l={6} $r={5}>
                      <Slider w={118} at={58} label="Aufnahmelautstärke" />
                    </Spaced>
                    <IconSlot $w={26}><Speaker /></IconSlot>
                    <Spaced $l={6} $r={7}>
                      <Slider w={118} at={101} label="Wiedergabelautstärke" />
                    </Spaced>
                  </Toolbar>
                  <Toolbar>
                    <Grip />
                    <EditGroups>
                      <ButtonGroup>
                        <SmallButton $edge aria-label="Ausschneiden"><CutIcon /></SmallButton>
                        <SmallButton $edge aria-label="Kopieren"><CopyIcon /></SmallButton>
                        <SmallButton $edge aria-label="Einfügen"><PasteIcon /></SmallButton>
                        <SmallButton $edge aria-label="Trimmen"><TrimIcon /></SmallButton>
                        <SmallButton $edge aria-label="Stille"><SilenceIcon /></SmallButton>
                      </ButtonGroup>
                      <ButtonGroup>
                        <SmallButton $edge aria-label="Rückgängig"><UndoIcon /></SmallButton>
                        <SmallButton $edge aria-label="Wiederholen"><UndoIcon redo /></SmallButton>
                      </ButtonGroup>
                      <ButtonGroup>
                        <SmallButton $edge aria-label="Sync-Lock"><ClockIcon /></SmallButton>
                      </ButtonGroup>
                      <ButtonGroup>
                        <SmallButton $edge aria-label="Vergrößern"><ZoomIcon sign="M9 7h6M12 4v6" /></SmallButton>
                        <SmallButton $edge aria-label="Verkleinern"><ZoomIcon sign="M9 7h6" /></SmallButton>
                        <SmallButton $edge aria-label="Auswahl einpassen"><FitSelectionIcon /></SmallButton>
                        <SmallButton $edge aria-label="Projekt einpassen"><FitProjectIcon /></SmallButton>
                      </ButtonGroup>
                    </EditGroups>
                  </Toolbar>
                  <Toolbar $open>
                    <Grip />
                    <SmallButton $edge aria-label="Mit Tempo abspielen"><SmallPlay /></SmallButton>
                    <Spaced $l={6} $r={0}>
                      <Slider w={88} at={28} label="Wiedergabetempo" />
                    </Spaced>
                  </Toolbar>
                  <Filler />
                </DockRow>
              </DockColumn>
            </Dock>

            <DockRow>
              <Toolbar>
                <Grip />
                <DeviceControls>
                  <Select w={103} value="Core Audio" label="Audio-Host" />
                  <IconSlot $w={25}><Mic /></IconSlot>
                  <Select w={164} value="Mikrofon (integriert)" label="Aufnahmegerät" />
                  <Select w={107} value="2 (Stereo)..." label="Kanäle" />
                  <IconSlot $w={25}><Speaker /></IconSlot>
                  <Select w={164} value="Ausgang (integriert)" label="Wiedergabegerät" />
                </DeviceControls>
              </Toolbar>
              <Toolbar>
                <Spaced $l={1} $r={1} />
              </Toolbar>
              <Filler />
            </DockRow>

            <TimeRuler>
              <Ticks $lead>
                <i />
              </Ticks>
              {times.map((t) => (
                <TimeCell key={t} $zero={t === "0"}>
                  {t}
                  <Ticks>
                    <i />
                    <i />
                    <i />
                  </Ticks>
                  {t === "0" && (
                    <PlayMarker width="6" height="13" viewBox="0 0 6 13">
                      <path d="M5.500 0v12.500L.5 6.500z" fill="#ccc" stroke="#888" strokeWidth=".8" />
                    </PlayMarker>
                  )}
                </TimeCell>
              ))}
            </TimeRuler>

            <Middle>
              <TrackArea>
                <Track>
                  <TrackPanel>
                    <TrackHead>
                      <CloseButton aria-label="Spur schließen">
                        <svg width="8" height="8" viewBox="0 0 8 8" stroke="#000" strokeWidth="1.800">
                          <path d="M.5.5l7 7M7.500.5l-7 7" />
                        </svg>
                      </CloseButton>
                      <NameButton>
                        Maurice Rav
                        <Down w={12} />
                      </NameButton>
                    </TrackHead>
                    <TrackInfo>
                      Stereo, 44100Hz
                      <br />
                      16-bit PCM
                    </TrackInfo>
                    <MuteSolo>
                      <button>Stumm</button>
                      <button>Solo</button>
                    </MuteSolo>
                    <PanelSliders>
                      <Slider w={72} at={34} label="Verstärkung" />
                      <Slider w={72} at={34} label="Panorama" ends={["L", "R"]} />
                    </PanelSliders>
                    <Collapse aria-label="Spur einklappen">
                      <svg width="12" height="6" viewBox="0 0 12 6">
                        <path d="M0 6h12L6 0z" fill={line} />
                      </svg>
                    </Collapse>
                  </TrackPanel>
                  <AmpColumn>
                    <AmpScale />
                    <AmpScale />
                  </AmpColumn>
                  <Waves>
                    <Channel index={0} />
                    <ChannelGap />
                    <Channel index={1} />
                  </Waves>
                </Track>
              </TrackArea>
              <VScroll />
            </Middle>
            <HScroll>
              <HTrack>
                <HThumb />
              </HTrack>
            </HScroll>

            <SelectionBar>
              <Grip />
              <Field $l={1} $w={91}>
                <label htmlFor="rate">Projektfrequenz (Hz):</label>
                <Combo>
                  <input id="rate" defaultValue="44100" />
                  <button aria-label="Frequenz wählen">
                    <svg width="9" height="6" viewBox="0 0 9 6" fill="none" stroke="#333" strokeWidth="1.300">
                      <path d="M1 1l3.500 3.500L8 1" />
                    </svg>
                  </button>
                </Combo>
              </Field>
              <Divider />
              <Field $l={6} $inset={3}>
                <label htmlFor="snap">Einrasten:</label>
                <Select id="snap" small w={85} value="Aus" label="Einrasten" />
              </Field>
              <Field $l={6}>
                <span>Anfang der Auswahl:</span>
                <TimeField label="Anfang der Auswahl" />
              </Field>
              <Field $l={6}>
                <Radios>
                  <label>
                    <input type="radio" name="end" defaultChecked />
                    Ende
                  </label>
                  <label>
                    <input type="radio" name="end" />
                    Länge
                  </label>
                </Radios>
                <TimeField label="Ende der Auswahl" />
              </Field>
              <Divider />
              <Field $l={6}>
                <span>Audioposition:</span>
                <TimeField label="Audioposition" />
              </Field>
            </SelectionBar>
            <StatusBar>
              <span>Gestoppt.</span>
              <span>Click and drag to select audio, Command-Click to scrub, Command-Double-Click to scroll-scrub, Command-drag to seek</span>
            </StatusBar>
          </Window>
        </Backdrop>
      </Frame>
    </Page>
  );
}
